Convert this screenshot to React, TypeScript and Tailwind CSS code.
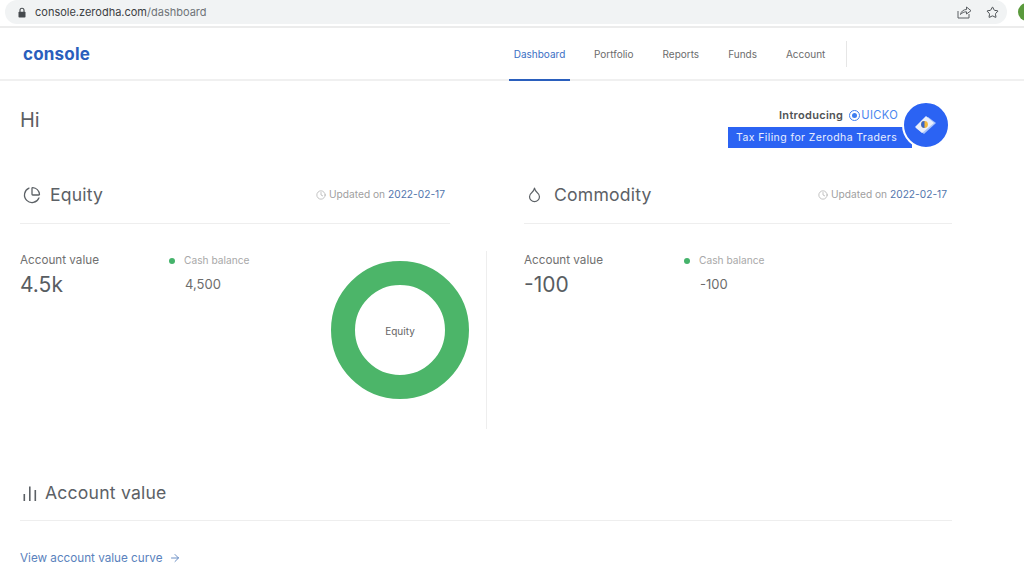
import { ArrowRight, ChartPie, Clock, Droplet, Star } from "lucide-react";

const navItems = ["Portfolio", "Reports", "Funds", "Account"];

function SectionTitle({ icon, title, date }: { icon: React.ReactNode; title: string; date: string }) {
	return (
		<div className="flex h-[56px] items-center justify-between border-b border-[#eeeeee] pb-[1px]">
			<div className="flex items-center text-[17.6px] tracking-[0.2px] text-[#5c6166]">
				{icon}
				{title}
			</div>
			<div className="mr-[5px] flex items-center text-[10.2px] text-[#a0a0a0]">
				<Clock size={10} strokeWidth={1.5} className="mr-[3px]" />
				Updated on&nbsp;<span className="text-[#5275ad]">{date}</span>
			</div>
		</div>
	);
}

function Stats({ total, cash, gap }: { total: string; cash: string; gap: string }) {
	return (
		<div className="flex pt-[2px]">
			<div className={gap}>
				<div className="h-[15px] text-[11.7px] leading-[15px] text-[#707070]">Account value</div>
				<div className="mt-[3px] text-[21px] leading-[28px] text-[#585d62]">{total}</div>
			</div>
			<div>
				<div className="flex h-[15px] items-center text-[10.2px] text-[#a8a8a8]">
					<span className="mr-[9px] ml-[1px] size-[6px] rounded-full bg-[#45b36b]" />
					Cash balance
				</div>
				<div className="mt-[3px] ml-[17px] text-[13px] leading-[26px] text-[#6c6c6c]">{cash}</div>
			</div>
		</div>
	);
}

export default function App() {
	return (
		<div className="h-[577px] w-[1024px] overflow-hidden bg-white font-['Inter',sans-serif]">
			<div className="flex h-[28px] items-center border-b-2 border-[#ececec] pb-[2px]">
				<div className="ml-[5px] flex h-[24px] w-[1002px] shrink-0 items-center rounded-full bg-[#f1f3f4] pl-[12px]">
					<svg width="10" height="11" viewBox="0 0 10 11" className="text-[#45494d]">
						<path d="M3 5V3.2a2 2 0 0 1 4 0V5" fill="none" stroke="currentColor" strokeWidth="1.1" />
						<rect x="1.5" y="4.8" width="7" height="5.7" rx="0.8" fill="currentColor" />
					</svg>
					<span className="ml-[8px] text-[11px] text-[#3c4043]">
						console.zerodha.com<span className="text-[#6f7478]">/dashboard</span>
					</span>
					<div className="ml-auto mr-[8px] flex items-center gap-[14px] text-[#5a5e62]">
						<svg width="15" height="14" viewBox="0 0 15 14" fill="none" stroke="currentColor" strokeWidth="1">
							<path d="M1 6v7h11V9" />
							<path d="M3.5 9.5C4 6.5 6.5 4.5 9.5 4.5V2L14 5.7 9.5 9V6.8C7 6.8 5 7.8 3.5 9.5Z" />
						</svg>
						<Star size={13} strokeWidth={1.8} className="text-[#45494d]" />
					</div>
				</div>
				<div className="ml-[11px] size-[18px] shrink-0 rounded-full bg-[#5a9a3c]" />
			</div>

			<header className="flex h-[53px] border-b-2 border-[#f0f0f0]">
				<div className="ml-[23px] w-[486px] pt-[15px] text-[17px] leading-[22px] font-bold tracking-[0.2px] text-[#2a5fbd]">
					console
				</div>
				<nav className="flex text-[10px] text-[#6c6c6c]">
					<div className="mr-[-5px] mb-[-2px] flex w-[61px] items-center justify-center border-b-2 border-[#2a5fbd] pt-[2px] text-[#3b6fc4]">
						Dashboard
					</div>
					{navItems.map((item) => (
						<div key={item} className="ml-[29px] flex items-center pt-[2px]">
							{item}
						</div>
					))}
					<div className="mt-[13px] ml-[21px] h-[26px] w-px bg-[#e6e6e6]" />
				</nav>
			</header>

			<main className="ml-[20px] w-[932px]">
				<div className="flex h-[87px] justify-between">
					<div className="pt-[25px] text-[20px] leading-[28px] text-[#5c6064]">Hi</div>
					<div className="relative mt-[22px] mr-[40px] h-[45px] w-[184px]">
						<div className="flex h-[24px] items-center justify-end pr-[14px] text-[11px] font-semibold tracking-[0.3px] text-[#505356]">
							Introducing
							<span className="mr-[1px] ml-[6px] flex size-[11px] items-center justify-center rounded-full border-[1.5px] border-[#3f7ef0]">
								<span className="size-[5px] rounded-full bg-[#3f7ef0]" />
							</span>
							<span className="text-[11.2px] font-normal text-[#4a86ee]">UICKO</span>
						</div>
						<div className="flex h-[21px] items-center bg-[#2b63f3] pl-[8px] text-[10.5px] tracking-[0.4px] text-[#e8eeff]">
							Tax Filing for Zerodha Traders
						</div>
						<div className="absolute top-[-2px] right-[-38px] flex size-[48px] items-center justify-center rounded-full border-2 border-white bg-[#2b63f3]">
							<svg width="26" height="24" viewBox="0 0 26 24">
								<path d="M3 15 15 4l8 6-12 11Z" fill="#a9c4fb" />
								<path d="M2 14 13 3l8 7-12 10Z" fill="#e9effc" />
								<circle cx="11.5" cy="11.5" r="3.4" fill="#f3b93c" />
								<path d="M11.5 8.1a3.4 3.4 0 0 0 0 6.8Z" fill="#3a66c8" />
							</svg>
						</div>
					</div>
				</div>

				<div className="grid grid-cols-[430px_428px] gap-x-[74px]">
					<SectionTitle
						title="Equity"
						date="2022-02-17"
						icon={<ChartPie size={18} strokeWidth={1.7} className="mr-[9px] ml-[3px]" />}
					/>
					<SectionTitle
						title="Commodity"
						date="2022-02-17"
						icon={<Droplet size={17} strokeWidth={1.7} className="mr-[11px] ml-[2px]" />}
					/>
				</div>

				<div className="mt-[27px] flex h-[178px]">
					<div className="flex w-[467px] border-r border-[#eeeeee] pr-[17px]">
						<Stats total="4.5k" cash="4,500" gap="w-[148px]" />
						<div className="mt-[10px] ml-auto flex size-[138px] items-center justify-center rounded-full border-[24px] border-[#4cb569] pt-[3px] text-[10px] text-[#666666]">
							Equity
						</div>
					</div>
					<div className="ml-[37px]">
						<Stats total="-100" cash="-100" gap="w-[159px]" />
					</div>
				</div>

				<div className="mt-[39px] flex h-[53px] items-center border-b border-[#eeeeee] pb-[1px] text-[17.6px] tracking-[0.2px] text-[#5c6166]">
					<svg width="14" height="16" viewBox="0 0 14 16" fill="currentColor" className="mr-[8px] ml-[3px]">
						<rect x="0.5" y="8" width="1.6" height="7" />
						<rect x="6" y="0.5" width="1.6" height="14.5" />
						<rect x="11.5" y="4" width="1.6" height="11" />
					</svg>
					Account value
				</div>
				<div className="mt-[28px] flex items-center text-[11.7px] leading-[18px] text-[#5a82bd]">
					View account value curve
					<ArrowRight size={12} strokeWidth={1.8} className="ml-[7px]" />
				</div>
			</main>
		</div>
	);
}
